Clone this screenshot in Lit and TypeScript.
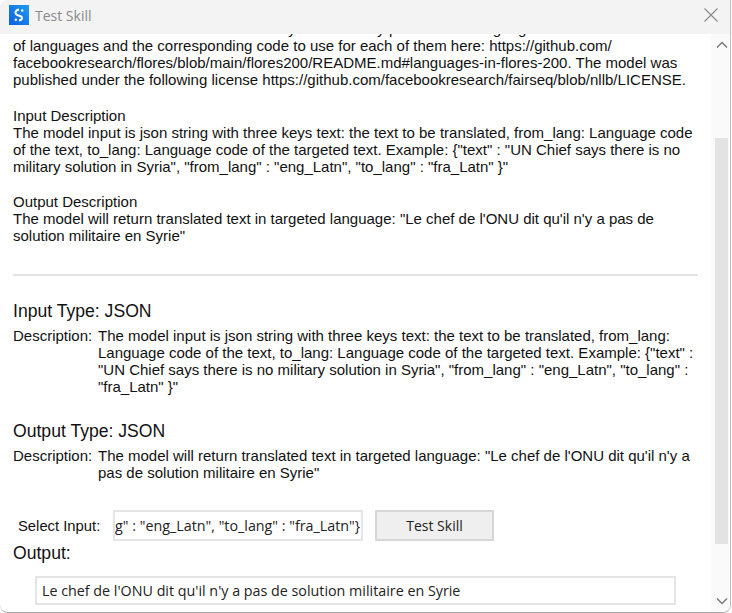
import { LitElement, html, css } from "lit";
import { customElement } from "lit/decorators.js";

@customElement("app-root")
export class AppRoot extends LitElement {
  static styles = css`
    :host { display: block; width: 732px; height: 613px; background: #fff; font-family: "Liberation Sans", Arial, sans-serif; font-size: 15px; color: #111; overflow: hidden; }
    .win { box-sizing: border-box; width: 731px; height: 613px; background: #fff; border-right: 1px solid #bdbdbd; border-bottom: 1px solid #a8a8a8; border-bottom-left-radius: 8px; border-bottom-right-radius: 8px; border-top-left-radius: 8px; overflow: hidden; display: flex; flex-direction: column; }
    .title { box-sizing: border-box; height: 34px; flex: none; background: #f3f3f3; display: flex; align-items: center; padding: 0 12px 4px 9px; gap: 6px; }
    .logo { width: 20px; height: 20px; flex: none; }
    .name { flex: 1; font-family: "Open Sans", sans-serif; font-size: 14px; color: #8a8a8a; }
    .close { width: 14px; height: 14px; flex: none; }
    .body { flex: 1; display: flex; min-height: 0; }
    .view { flex: 1; overflow: hidden; padding: 0 13px 0 13px; }
    .scroll { box-sizing: border-box; width: 19px; padding-left: 2px; flex: none; background: #fafafa; display: flex; flex-direction: column; align-items: center; }
    .scroll svg { flex: none; width: 12px; height: 8px; margin: 7px 0; }
    .track { flex: 1; width: 13px; display: flex; flex-direction: column; }
    .thumb { width: 13px; height: 406px; margin-top: 82px; background: #e3e3e3; }
    .inner { margin-top: -14px; }
    p { margin: 0; white-space: nowrap; }
    .gap2 { margin-top: 18px; }
    .first { margin-top: 19px; }
    hr { border: 0; height: 2px; background: #e2e2e2; margin: 30px 0 25px; }
    h3 { margin: 0; font-weight: 400; font-size: 17.6px; line-height: 20px; }
    .desc { display: flex; margin-top: 6px; }
    .desc .k { width: 85px; flex: none; }
    .desc p { flex: 1; }
    .out { margin-top: 26px; }
    .sel { display: flex; align-items: center; margin: 29px 0 0 5px; }
    .sel label { width: 95px; flex: none; font-size: 14.8px; }
    input { box-sizing: border-box; width: 250px; height: 31px; border: 2px solid #e5e5e5; outline: 0; margin: 0; padding: 0 1px 0 0; background: #fff; font-family: "Open Sans", sans-serif; font-size: 14.3px; color: #222; }
    button { box-sizing: border-box; width: 119px; height: 31px; margin-left: 12px; background: #efefef; border: 2px solid #d6d6d6; font-family: "Open Sans", sans-serif; font-size: 14px; color: #222; padding: 0; }
    .olab { margin-top: 2px; }
    .ob { box-sizing: border-box; width: 641px; height: 29px; margin: 13px 0 0 22px; border: 2px solid #e5e5e5; display: flex; align-items: center; padding: 0 5px; font-family: "Open Sans", sans-serif; font-size: 14.3px; white-space: nowrap; color: #222; }
  `;

  firstUpdated() {
    const el = this.renderRoot.querySelector("input");
    if (el) el.scrollLeft = el.scrollWidth;
  }

  render() {
    const value = `{"text" : "UN Chief says there is no military solution in Syria", "from_lang" : "eng_Latn", "to_lang" : "fra_Latn"}`;
    return html`<div class="win">
      <div class="title">
        <svg class="logo" viewBox="0 0 20 20">
          <defs><linearGradient id="g" x1="0" y1="1" x2="1" y2="0"><stop offset="0" stop-color="#0a5fe0"/><stop offset="1" stop-color="#1f9bf0"/></linearGradient></defs>
          <rect width="20" height="20" fill="url(#g)"/>
          <path d="M10 4.5 Q6.5 5 6.5 7.8 Q6.5 9.8 9.5 10.4 Q13 11 13 13 Q13 15 10 15.5" fill="none" stroke="#fff" stroke-width="2"/>
          <circle cx="13.2" cy="5.5" r="1.2" fill="#fff"/>
          <circle cx="6.8" cy="14.8" r="1.2" fill="#fff"/>
        </svg>
        <span class="name">Test Skill</span>
        <svg class="close" viewBox="0 0 14 14"><path d="M.5 .5 L13.5 13.5 M13.5 .5 L.5 13.5" stroke="#8a8a8a" stroke-width="1.1" fill="none"/></svg>
      </div>
      <div class="body">
        <div class="view"><div class="inner">
          <p>The NLLB model can translate text directly between any pair of 200+ languages. You can find the list</p>
          <p>of languages and the corresponding code to use for each of them here: https://github.com/<br>facebookresearch/flores/blob/main/flores200/README.md#languages-in-flores-200. The model was<br>published under the following license https://github.com/facebookresearch/fairseq/blob/nllb/LICENSE.</p>
          <p class="first">Input Description<br>The model input is json string with three keys text: the text to be translated, from_lang: Language code<br>of the text, to_lang: Language code of the targeted text. Example: {"text" : "UN Chief says there is no<br>military solution in Syria", "from_lang" : "eng_Latn", "to_lang" : "fra_Latn" }"</p>
          <p class="gap2">Output Description<br>The model will return translated text in targeted language: "Le chef de l'ONU dit qu'il n'y a pas de<br>solution militaire en Syrie"</p>
          <hr>
          <h3>Input Type: JSON</h3>
          <div class="desc"><span class="k">Description:</span><p>The model input is json string with three keys text: the text to be translated, from_lang:<br>Language code of the text, to_lang: Language code of the targeted text. Example: {"text" :<br>"UN Chief says there is no military solution in Syria", "from_lang" : "eng_Latn", "to_lang" :<br>"fra_Latn" }"</p></div>
          <h3 class="out">Output Type: JSON</h3>
          <div class="desc"><span class="k">Description:</span><p>The model will return translated text in targeted language: "Le chef de l'ONU dit qu'il n'y a<br>pas de solution militaire en Syrie"</p></div>
          <div class="sel"><label>Select Input:</label><input .value=${value} readonly><button>Test Skill</button></div>
          <h3 class="olab">Output:</h3>
          <div class="ob">Le chef de l'ONU dit qu'il n'y a pas de solution militaire en Syrie</div>
        </div></div>
        <div class="scroll">
          <svg viewBox="0 0 12 8"><path d="M1 6.5 L6 1.5 L11 6.5" fill="none" stroke="#7a7a7a" stroke-width="1.5"/></svg>
          <div class="track"><div class="thumb"></div></div>
          <svg viewBox="0 0 12 8"><path d="M1 1.5 L6 6.5 L11 1.5" fill="none" stroke="#7a7a7a" stroke-width="1.5"/></svg>
        </div>
      </div>
    </div>`;
  }
}
